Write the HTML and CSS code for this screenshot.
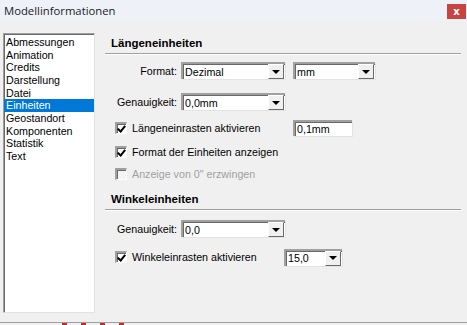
FILE: index.html
```html
<!DOCTYPE html>
<html lang="de">
  <head>
    <meta charset="UTF-8" />
    <title>Modellinformationen</title>
    <link rel="stylesheet" href="styles.css">
  </head>
  <body>
    <div class="window">
      <div class="titlebar">
        <span class="title">Modellinformationen</span>
        <button class="close">x</button>
      </div>
      <div class="content">
        <ul class="list">
          <li>Abmessungen</li>
          <li>Animation</li>
          <li>Credits</li>
          <li>Darstellung</li>
          <li>Datei</li>
          <li class="selected">Einheiten</li>
          <li>Geostandort</li>
          <li>Komponenten</li>
          <li>Statistik</li>
          <li>Text</li>
        </ul>
        <div class="panel">
          <div class="heading">Längeneinheiten</div>

          <div class="row row-format">
            <span class="label">Format:</span>
            <div class="select w-format"><span class="value">Dezimal</span><span class="arrow"></span></div>
            <div class="select w-unit"><span class="value">mm</span><span class="arrow"></span></div>
          </div>

          <div class="row row-prec">
            <span class="label">Genauigkeit:</span>
            <div class="select w-format"><span class="value">0,0mm</span><span class="arrow"></span></div>
          </div>

          <div class="row check-row cb-first">
            <span class="box checked"></span>
            <span class="check-label wide">Längeneinrasten aktivieren</span>
            <div class="textbox">0,1mm</div>
          </div>

          <div class="row check-row cb-second">
            <span class="box checked"></span>
            <span class="check-label">Format der Einheiten anzeigen</span>
          </div>

          <div class="row check-row cb-third disabled">
            <span class="box"></span>
            <span class="check-label">Anzeige von 0" erzwingen</span>
          </div>

          <div class="heading heading-second">Winkeleinheiten</div>

          <div class="row row-angle">
            <span class="label">Genauigkeit:</span>
            <div class="select w-format"><span class="value">0,0</span><span class="arrow"></span></div>
          </div>

          <div class="row check-row cb-angle">
            <span class="box checked"></span>
            <span class="check-label narrow">Winkeleinrasten aktivieren</span>
            <div class="select w-snap"><span class="value">15,0</span><span class="arrow"></span></div>
          </div>
        </div>
      </div>
      <div class="bottom">
        <span class="mark"></span><span class="mark"></span><span class="mark"></span><span class="mark"></span>
      </div>
    </div>
  </body>
</html>
```

FILE: styles.css
```css
body {
  margin: 0;
  background: #f0f0f0;
  font-family: "Liberation Sans", Arial, sans-serif;
  font-size: 10.7px;
  color: #000;
}
.window {
  width: 467px;
  height: 325px;
  display: flex;
  flex-direction: column;
  background: #f0f0f0;
  overflow: hidden;
}
.titlebar {
  height: 21px;
  flex: none;
  display: flex;
  align-items: center;
  justify-content: space-between;
  background: #eef2f8;
}
.title {
  padding-left: 4px;
  font-family: "Open Sans", sans-serif;
  font-size: 11.3px;
  color: #1b1b1b;
}
.close {
  width: 19px;
  height: 15px;
  margin-right: 1px;
  margin-top: 1px;
  padding: 0;
  border: none;
  background: #c84441;
  color: #fff;
  font-family: "DejaVu Sans", sans-serif;
  font-size: 10px;
  font-weight: bold;
  line-height: 13px;
}
.content {
  flex: 1;
  display: flex;
  padding: 12px 0 0 3px;
}
.list {
  width: 90px;
  height: 278px;
  margin: 0;
  padding: 2px 0 0 0;
  box-sizing: border-box;
  height: 280px;
  list-style: none;
  background: #fff;
  border-top: 1px solid #a0a0a0;
  border-left: 1px solid #a0a0a0;
  border-right: 1px solid #e3e3e3;
  border-bottom: 1px solid #e3e3e3;
  box-shadow: inset 1px 1px 0 #696969;
  flex: none;
  width: 92px;
}
.list li {
  height: 12.67px;
  line-height: 12.67px;
  padding-left: 2px;
}
.list .selected {
  background: #0078d7;
  color: #fff;
}
.panel {
  flex: 1;
  display: flex;
  flex-direction: column;
  padding-left: 10px;
  padding-right: 6px;
}
.heading {
  margin-top: 3px;
  height: 14px;
  line-height: 14px;
  padding: 0 0 3px 6px;
  font-size: 11.5px;
  font-weight: bold;
  border-bottom: 1px solid #a0a0a0;
  box-shadow: 0 1px 0 #fff;
}
.heading-second {
  margin-top: 9px;
}
.row {
  display: flex;
  align-items: center;
  height: 19px;
}
.row-format { margin-top: 7px; }
.row-prec { margin-top: 12px; }
.cb-first { margin-top: 8px; }
.cb-second { margin-top: 6px; }
.cb-third { margin-top: 4px; }
.row-angle { margin-top: 9px; }
.cb-angle { margin-top: 10px; }
.label {
  width: 72px;
  margin-right: 4px;
  text-align: right;
}
.select {
  height: 15px;
  display: flex;
  align-items: center;
  background: #fff;
  border-top: 2px solid;
  border-left: 2px solid;
  border-color: #a0a0a0 #fff #fff #a0a0a0;
  box-shadow: inset 1px 1px 0 #696969, 1px 1px 0 #e3e3e3;
}
.select .value {
  flex: 1;
  padding-left: 2px;
}
.w-format { width: 102px; }
.w-unit { width: 80px; margin-left: 8px; }
.w-snap { width: 56px; }
.arrow {
  width: 14px;
  height: 13px;
  margin-right: 1px;
  background: #f0f0f0;
  border-top: 1px solid #fff;
  border-left: 1px solid #fff;
  border-right: 1px solid #696969;
  border-bottom: 1px solid #696969;
  display: flex;
  align-items: center;
  justify-content: center;
}
.arrow::after {
  content: "";
  border-left: 4px solid transparent;
  border-right: 4px solid transparent;
  border-top: 4px solid #000;
}
.check-row {
  height: 18px;
  padding-left: 10px;
}
.box {
  width: 9px;
  height: 9px;
  border-top: 2px solid;
  border-left: 2px solid;
  border-right: 1px solid #fff;
  border-bottom: 1px solid #fff;
  border-color: #a0a0a0 #fff #fff #a0a0a0;
  box-shadow: inset 1px 1px 0 #696969;
  background: #fff;
  margin-right: 5px;
  position: relative;
}
.box.checked::after {
  content: "";
  position: absolute;
  left: 2px;
  top: 0px;
  width: 3px;
  height: 6px;
  border-right: 2px solid #000;
  border-bottom: 2px solid #000;
  transform: rotate(40deg);
}
.check-label.wide { width: 161px; }
.check-label.narrow { width: 152px; }
.disabled .check-label { color: #a0a0a0; }
.disabled .box { background: #f4f4f4; }
.textbox {
  width: 55px;
  height: 14px;
  line-height: 14px;
  padding-left: 2px;
  background: #fff;
  border-top: 2px solid;
  border-left: 2px solid;
  border-color: #a0a0a0 #fff #fff #a0a0a0;
  box-shadow: inset 1px 1px 0 #696969, 1px 1px 0 #e3e3e3;
}
.bottom {
  height: 2px;
  flex: none;
  border-top: 1px solid #a0a0a0;
  display: flex;
  gap: 14px;
  padding-left: 62px;
}
.mark {
  width: 5px;
  height: 2px;
  background: #c42a2a;
}
```
